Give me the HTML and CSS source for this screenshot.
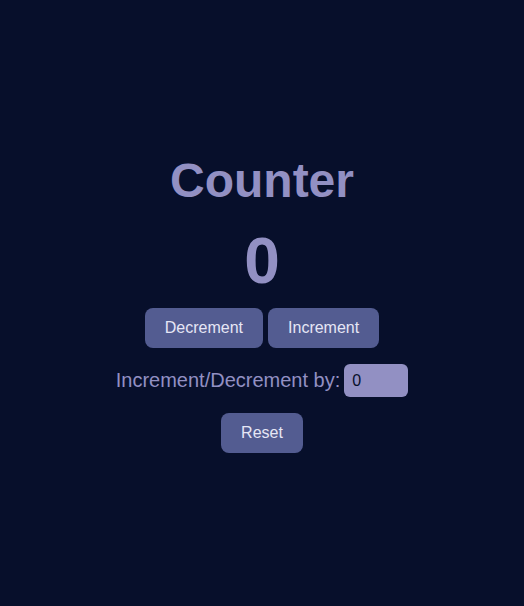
FILE: index.html
```html
<!DOCTYPE html>
<html>
<head>
<meta charset="utf-8">
<link rel="stylesheet" href="styles.css">
</head>
<body>
<main class="app">
  <h1 class="title">Counter</h1>
  <div class="count">0</div>
  <div class="buttons">
    <button class="btn">Decrement</button>
    <button class="btn">Increment</button>
  </div>
  <div class="step">
    <label class="step-label" for="step">Increment/Decrement by:</label>
    <input class="step-input" id="step" type="number" value="0">
  </div>
  <button class="btn reset">Reset</button>
</main>
</body>
</html>
```
FILE: styles.css
```css
html, body {
  margin: 0;
  padding: 0;
  height: 100%;
}
body {
  background: #070f2b;
  font-family: "Liberation Sans", Arial, sans-serif;
  color: #9290c3;
}
.app {
  height: 100%;
  display: flex;
  flex-direction: column;
  align-items: center;
  justify-content: center;
}
.title {
  font-size: 48px;
  font-weight: bold;
  margin: 0 0 16px;
  line-height: 56px;
}
.count {
  font-size: 64px;
  font-weight: bold;
  line-height: 72px;
  margin-bottom: 11px;
}
.buttons {
  display: flex;
  gap: 5px;
}
.btn {
  background: #535c91;
  color: #e6e6f5;
  border: none;
  border-radius: 8px;
  padding: 0 20px;
  height: 40px;
  font-family: "Liberation Sans", Arial, sans-serif;
  font-size: 16px;
}
.step {
  display: flex;
  align-items: center;
  gap: 4px;
  margin-top: 16px;
}
.step-label {
  font-size: 20px;
}
.step-input {
  width: 64px;
  height: 33px;
  box-sizing: border-box;
  background: #9290c3;
  border: none;
  border-radius: 6px;
  padding: 0 8px;
  color: #070f2b;
  font-family: "Liberation Sans", Arial, sans-serif;
  font-size: 16px;
  -moz-appearance: textfield;
}
.step-input::-webkit-inner-spin-button,
.step-input::-webkit-outer-spin-button {
  -webkit-appearance: none;
  margin: 0;
}
.reset {
  margin-top: 16px;
}
```
